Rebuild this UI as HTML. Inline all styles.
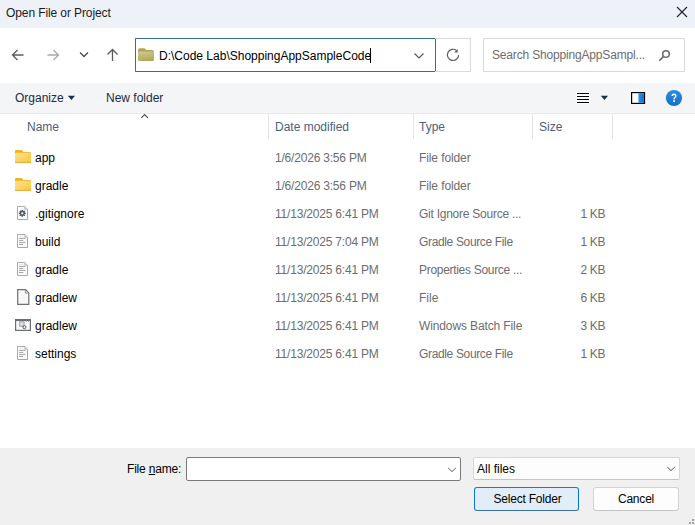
<!DOCTYPE html>
<html><head><meta charset="utf-8">
<style>
*{box-sizing:border-box;margin:0;padding:0}
html,body{width:695px;height:525px;overflow:hidden;background:#fff;font-family:"Liberation Sans",sans-serif;font-size:12px;color:#000}
.abs{position:absolute}
.t{position:absolute;white-space:nowrap;line-height:14px}
#title{left:0;top:0;width:695px;height:28px;background:#eef2f8}
#nav{left:0;top:28px;width:695px;height:55px;background:#fff}
#tb{left:0;top:83px;width:695px;height:31px;background:#f4f5f7;border-bottom:1px solid #e8e9ec}
#bottom{left:0;top:448px;width:695px;height:77px;background:#f0f0f0}
.vd{position:absolute;top:114px;height:25px;width:1px;background:#e5e5e5}
.hdr{color:#4c607a}
.gray{color:#6d6d6d}
.dt{letter-spacing:-0.2px}
.ty{letter-spacing:-0.3px}
</style></head><body>
<div id="title" class="abs"></div>
<div class="t" style="left:6px;top:6px;color:#1a1a1a;letter-spacing:-0.1px">Open File or Project</div>
<svg class="abs" style="left:676px;top:6px" width="12" height="12" viewBox="0 0 12 12"><path d="M1 1L11 11M11 1L1 11" stroke="#222" stroke-width="1.1"/></svg>

<div id="nav" class="abs"></div>
<svg class="abs" style="left:10px;top:47px" width="16" height="16" viewBox="0 0 16 16"><path d="M2.5 8H13.5M7.5 3L2.5 8L7.5 13" fill="none" stroke="#5c5c5c" stroke-width="1.3"/></svg>
<svg class="abs" style="left:45px;top:47px" width="16" height="16" viewBox="0 0 16 16"><path d="M2.5 8H13.5M8.5 3L13.5 8L8.5 13" fill="none" stroke="#a9a9a9" stroke-width="1.3"/></svg>
<svg class="abs" style="left:78px;top:47px" width="12" height="12" viewBox="0 0 12 12"><path d="M2 5.5L6 9.5L10 5.5" fill="none" stroke="#4a4a4a" stroke-width="1.3"/></svg>
<svg class="abs" style="left:104px;top:47px" width="16" height="16" viewBox="0 0 16 16"><path d="M8.5 2.5V14M3.5 7.5L8.5 2.5L13.5 7.5" fill="none" stroke="#5c5c5c" stroke-width="1.3"/></svg>

<div class="abs" style="left:135px;top:38px;width:301px;height:34px;border:1px solid #0c78d6;border-top-color:#3a6a98;border-bottom-color:#3a6a98;background:#fff;border-radius:1px"></div>
<svg class="abs" style="left:137px;top:47px" width="18" height="15" viewBox="0 0 18 15"><defs><linearGradient id="ag" x1="0" y1="0" x2="0.3" y2="1"><stop offset="0" stop-color="#d0cb98"/><stop offset="1" stop-color="#b3a95e"/></linearGradient></defs><path d="M1 3Q1 1.2 2.8 1.2H6.8Q7.8 1.2 8.4 2L9.2 3H15Q17 3 17 5V12Q17 14 15 14H3Q1 14 1 12Z" fill="#b0a550"/><path d="M1 5.6Q1 4.4 2.3 4.4H15.7Q17 4.4 17 5.8V12.3Q17 14 15.3 14H2.7Q1 14 1 12.3Z" fill="url(#ag)"/></svg>
<div class="t" style="left:159px;top:49px;color:#000">D:\Code Lab\ShoppingAppSampleCode</div>
<div class="abs" style="left:370px;top:48px;width:1px;height:15px;background:#000"></div>
<svg class="abs" style="left:413px;top:50px" width="12" height="10" viewBox="0 0 12 10"><path d="M1.5 3.5L6 8L10.5 3.5" fill="none" stroke="#555" stroke-width="1.1"/></svg>
<div class="abs" style="left:435px;top:38px;width:36px;height:34px;border:1px solid #dadada;border-left:none"></div>
<svg class="abs" style="left:443px;top:45px" width="20" height="19" viewBox="0 0 20 19"><path d="M15.6 9.9A5.6 5.6 0 1 1 13.6 5.6" fill="none" stroke="#5e5e5e" stroke-width="1.15"/><path d="M14.7 4.1V7.5H11.1Z" fill="#5e5e5e"/></svg>
<div class="abs" style="left:483px;top:38px;width:202px;height:34px;border:1px solid #d9d9d9"></div>
<div class="t gray" style="left:492px;top:48px;letter-spacing:-0.17px">Search ShoppingAppSampl...</div>
<svg class="abs" style="left:656px;top:46px" width="16" height="16" viewBox="0 0 16 16"><circle cx="10" cy="8" r="3.3" fill="none" stroke="#6b6b6b" stroke-width="1.5"/><path d="M7.6 10.4L3.3 14.7" stroke="#6b6b6b" stroke-width="1.6"/></svg>

<div id="tb" class="abs"></div>
<div class="t" style="left:15px;top:91px;color:#1c2b45">Organize</div>
<div class="t" style="left:106px;top:91px;color:#1c2b45">New folder</div>

<svg class="abs" style="left:66px;top:94px" width="12" height="8" viewBox="0 0 12 8"><path d="M1.8 1.8H9.1L5.45 6.1Z" fill="#1e3050"/></svg>
<div class="abs" style="left:576px;top:92px;width:14px;height:12px;background:#fff"></div>
<svg class="abs" style="left:577px;top:92px" width="12" height="12" viewBox="0 0 12 12"><path d="M0 1.5H12M0 4.5H12M0 7.5H12M0 10.5H12" stroke="#000" stroke-width="1"/></svg>
<svg class="abs" style="left:599px;top:94px" width="12" height="8" viewBox="0 0 12 8"><path d="M1.8 1.8H9.1L5.45 6.1Z" fill="#1e3050"/></svg>
<svg class="abs" style="left:631px;top:92px" width="15" height="12" viewBox="0 0 15 12"><defs><linearGradient id="pg" x1="0" y1="0" x2="1" y2="0"><stop offset="0" stop-color="#2a9af0"/><stop offset="1" stop-color="#0a6ccc"/></linearGradient></defs><rect x="0.6" y="0.6" width="12.9" height="10.8" fill="#fff" stroke="#000" stroke-width="1.2"/><rect x="7.4" y="1.2" width="5.5" height="9.6" fill="url(#pg)"/></svg>
<svg class="abs" style="left:665px;top:89px" width="18" height="18" viewBox="0 0 18 18"><defs><linearGradient id="hg" x1="0" y1="0" x2="0" y2="1"><stop offset="0" stop-color="#2b8ee0"/><stop offset="1" stop-color="#1270c8"/></linearGradient></defs><circle cx="9" cy="9" r="8.1" fill="url(#hg)"/><path d="M7.2 7.1Q7.2 5.3 9 5.3Q10.8 5.3 10.8 6.9Q10.8 7.9 9.9 8.5Q9.1 9 9.1 10.1V10.6" fill="none" stroke="#fff" stroke-width="1.45"/><rect x="8.25" y="11.3" width="1.7" height="1.7" fill="#fff"/></svg>
<svg class="abs" style="left:139px;top:112px" width="12" height="8" viewBox="0 0 12 8"><path d="M2.3 5.9L5.6 2.6L8.9 5.9" fill="none" stroke="#505050" stroke-width="1.15"/></svg>
<div class="vd" style="left:268px"></div>
<div class="vd" style="left:413px"></div>
<div class="vd" style="left:532px"></div>
<div class="vd" style="left:612px"></div>
<div class="t hdr" style="left:27px;top:120px">Name</div>
<div class="t hdr" style="left:275px;top:120px">Date modified</div>
<div class="t hdr" style="left:419px;top:120px">Type</div>
<div class="t hdr" style="left:539px;top:120px">Size</div>

<div class="t" style="left:35px;top:151px">app</div>
<div class="t gray dt" style="left:275px;top:151px">1/6/2026 3:56 PM</div>
<div class="t gray ty" style="left:419px;top:151px;letter-spacing:-0.1px">File folder</div>
<div class="t" style="left:35px;top:179px">gradle</div>
<div class="t gray dt" style="left:275px;top:179px">1/6/2026 3:56 PM</div>
<div class="t gray ty" style="left:419px;top:179px;letter-spacing:-0.1px">File folder</div>
<div class="t" style="left:35px;top:207px">.gitignore</div>
<div class="t gray dt" style="left:275px;top:207px">11/13/2025 6:41 PM</div>
<div class="t gray ty" style="left:419px;top:207px;letter-spacing:-0.25px">Git Ignore Source ...</div>
<div class="t gray" style="letter-spacing:-0.4px;right:90px;top:207px">1 KB</div>
<div class="t" style="left:35px;top:235px">build</div>
<div class="t gray dt" style="left:275px;top:235px">11/13/2025 7:04 PM</div>
<div class="t gray ty" style="left:419px;top:235px;letter-spacing:-0.35px">Gradle Source File</div>
<div class="t gray" style="letter-spacing:-0.4px;right:90px;top:235px">1 KB</div>
<div class="t" style="left:35px;top:263px">gradle</div>
<div class="t gray dt" style="left:275px;top:263px">11/13/2025 6:41 PM</div>
<div class="t gray ty" style="left:419px;top:263px;letter-spacing:-0.3px">Properties Source ...</div>
<div class="t gray" style="letter-spacing:-0.4px;right:90px;top:263px">2 KB</div>
<div class="t" style="left:35px;top:291px">gradlew</div>
<div class="t gray dt" style="left:275px;top:291px">11/13/2025 6:41 PM</div>
<div class="t gray ty" style="left:419px;top:291px;letter-spacing:0px">File</div>
<div class="t gray" style="letter-spacing:-0.4px;right:90px;top:291px">6 KB</div>
<div class="t" style="left:35px;top:319px">gradlew</div>
<div class="t gray dt" style="left:275px;top:319px">11/13/2025 6:41 PM</div>
<div class="t gray ty" style="left:419px;top:319px;letter-spacing:-0.12px">Windows Batch File</div>
<div class="t gray" style="letter-spacing:-0.4px;right:90px;top:319px">3 KB</div>
<div class="t" style="left:35px;top:347px">settings</div>
<div class="t gray dt" style="left:275px;top:347px">11/13/2025 6:41 PM</div>
<div class="t gray ty" style="left:419px;top:347px;letter-spacing:-0.35px">Gradle Source File</div>
<div class="t gray" style="letter-spacing:-0.4px;right:90px;top:347px">1 KB</div>
<svg class="abs" style="left:14px;top:149px" width="18" height="15" viewBox="0 0 18 15"><defs><linearGradient id="fg148" x1="0" y1="0" x2="1" y2="1"><stop offset="0" stop-color="#ffe08a"/><stop offset="1" stop-color="#fcc741"/></linearGradient></defs><path d="M1 2.3Q1 1 2.3 1H7.2Q8 1 8.6 1.8L9.5 3H15.7Q17 3 17 4.3V13Q17 14 16 14H2Q1 14 1 13Z" fill="#efb320"/><path d="M1 5Q1 3.8 2.2 3.8H15.8Q17 3.8 17 5V12.8Q17 14 15.8 14H2.2Q1 14 1 12.8Z" fill="url(#fg148)"/><path d="M1.3 13.4H16.7" stroke="#e0a93a" stroke-width="0.9"/></svg>
<svg class="abs" style="left:14px;top:177px" width="18" height="15" viewBox="0 0 18 15"><defs><linearGradient id="fg176" x1="0" y1="0" x2="1" y2="1"><stop offset="0" stop-color="#ffe08a"/><stop offset="1" stop-color="#fcc741"/></linearGradient></defs><path d="M1 2.3Q1 1 2.3 1H7.2Q8 1 8.6 1.8L9.5 3H15.7Q17 3 17 4.3V13Q17 14 16 14H2Q1 14 1 13Z" fill="#efb320"/><path d="M1 5Q1 3.8 2.2 3.8H15.8Q17 3.8 17 5V12.8Q17 14 15.8 14H2.2Q1 14 1 12.8Z" fill="url(#fg176)"/><path d="M1.3 13.4H16.7" stroke="#e0a93a" stroke-width="0.9"/></svg>
<svg class="abs" style="left:17px;top:206px" width="12" height="15" viewBox="0 0 12 15"><path d="M0.5 0.5H7.8L10.5 3.2V13.5H0.5Z" fill="#fdfdfd" stroke="#a9a9a9" stroke-width="1"/><path d="M7.8 0.6V3.2H10.4" fill="#d8d8d8" stroke="#b0b0b0" stroke-width="0.8"/>
<g transform="translate(5.3 7.3)" fill="#4d5761"><circle r="2.4"/><rect x="-0.8" y="-3.4" width="1.6" height="6.8"/><rect x="-3.4" y="-0.8" width="6.8" height="1.6"/><rect x="-0.8" y="-3.4" width="1.6" height="6.8" transform="rotate(45)"/><rect x="-0.8" y="-3.4" width="1.6" height="6.8" transform="rotate(-45)"/><circle r="1.15" fill="#fdfdfd"/></g></svg>
<svg class="abs" style="left:17px;top:234px" width="12" height="15" viewBox="0 0 12 15"><path d="M0.5 0.5H7.8L10.5 3.2V13.5H0.5Z" fill="#fdfdfd" stroke="#a9a9a9" stroke-width="1"/><path d="M7.8 0.6V3.2H10.4" fill="#d8d8d8" stroke="#b0b0b0" stroke-width="0.8"/><path d="M2 2.4H6.5" stroke="#e0e0e0" stroke-width="0.8"/><path d="M2 4.4H8.5M2 6.4H6.3M2 8.4H8.5M2 10.5H6.3" stroke="#a3a3a3" stroke-width="1"/></svg>
<svg class="abs" style="left:17px;top:262px" width="12" height="15" viewBox="0 0 12 15"><path d="M0.5 0.5H7.8L10.5 3.2V13.5H0.5Z" fill="#fdfdfd" stroke="#a9a9a9" stroke-width="1"/><path d="M7.8 0.6V3.2H10.4" fill="#d8d8d8" stroke="#b0b0b0" stroke-width="0.8"/><path d="M2 2.4H6.5" stroke="#e0e0e0" stroke-width="0.8"/><path d="M2 4.4H8.5M2 6.4H6.3M2 8.4H8.5M2 10.5H6.3" stroke="#a3a3a3" stroke-width="1"/></svg>
<svg class="abs" style="left:17px;top:289px" width="13" height="17" viewBox="0 0 13 17"><path d="M0.7 0.7H8.6L11.8 3.9V15.3H0.7Z" fill="#f8f8f8" stroke="#707070" stroke-width="1.2"/><path d="M8.4 0.8V4.1H11.7" fill="none" stroke="#8a8a8a" stroke-width="0.9"/></svg>
<svg class="abs" style="left:15px;top:319px" width="16" height="13" viewBox="0 0 16 13"><rect x="0.6" y="0.6" width="14.8" height="10.8" fill="#f8f8f8" stroke="#6e6e6e" stroke-width="1.2"/><path d="M0.6 1.3H15.4" stroke="#6e6e6e" stroke-width="1.5"/><path d="M11 2.3H12M13 2.3H14" stroke="#9a9a9a" stroke-width="0.9"/><g transform="translate(6.8 5)"><rect x="-2.3" y="-2.3" width="4.6" height="4.6" fill="#c9d0d8" stroke="#a3adb8" stroke-width="1"/><circle r="0.9" fill="#eef2f5"/></g><circle cx="9.4" cy="8.2" r="1.5" fill="#fff" stroke="#505050" stroke-width="1"/></svg>
<svg class="abs" style="left:17px;top:346px" width="12" height="15" viewBox="0 0 12 15"><path d="M0.5 0.5H7.8L10.5 3.2V13.5H0.5Z" fill="#fdfdfd" stroke="#a9a9a9" stroke-width="1"/><path d="M7.8 0.6V3.2H10.4" fill="#d8d8d8" stroke="#b0b0b0" stroke-width="0.8"/><path d="M2 2.4H6.5" stroke="#e0e0e0" stroke-width="0.8"/><path d="M2 4.4H8.5M2 6.4H6.3M2 8.4H8.5M2 10.5H6.3" stroke="#a3a3a3" stroke-width="1"/></svg>
<div id="bottom" class="abs"></div>
<div class="t" style="left:127px;top:462px;color:#000;letter-spacing:-0.2px">File <span style="text-decoration:underline">n</span>ame:</div>
<div class="abs" style="left:186px;top:457px;width:275px;height:24px;border:1px solid #7a7a7a;border-radius:2px;background:#fff"></div>
<svg class="abs" style="left:446px;top:464px" width="12" height="10" viewBox="0 0 12 10"><path d="M2.2 4L6 7.6L9.8 4" fill="none" stroke="#5a5a5a" stroke-width="1"/></svg>
<div class="abs" style="left:473px;top:457px;width:207px;height:23px;border:1px solid #d6d6d6;border-bottom-color:#c4c4c4;border-radius:2px;background:#fdfdfd"></div>
<div class="t" style="left:477px;top:462px;color:#000">All files</div>
<svg class="abs" style="left:665px;top:463px" width="12" height="10" viewBox="0 0 12 10"><path d="M2.2 4L6 7.6L9.8 4" fill="none" stroke="#5a5a5a" stroke-width="1"/></svg>
<div class="abs" style="left:474px;top:487px;width:105px;height:24px;border:1px solid #0a74d4;border-top-color:#3c6e9e;border-bottom-color:#3c6e9e;border-radius:3px;background:#e1eefa"></div>
<div class="t" style="left:475px;top:492px;width:105px;text-align:center;color:#000;letter-spacing:-0.2px">Select Folder</div>
<div class="abs" style="left:593px;top:487px;width:86px;height:24px;border:1px solid #d3d3d3;border-bottom-color:#c6c6c6;border-radius:3px;background:#fdfdfd"></div>
<div class="t" style="left:593px;top:492px;width:86px;text-align:center;color:#000;letter-spacing:-0.2px">Cancel</div>
<div class="abs" style="left:692px;top:519px;width:2px;height:2px;background:#a3a3a3"></div>
<div class="abs" style="left:689px;top:522px;width:2px;height:2px;background:#a3a3a3"></div>
<div class="abs" style="left:692px;top:522px;width:2px;height:2px;background:#a3a3a3"></div>
</body></html>
